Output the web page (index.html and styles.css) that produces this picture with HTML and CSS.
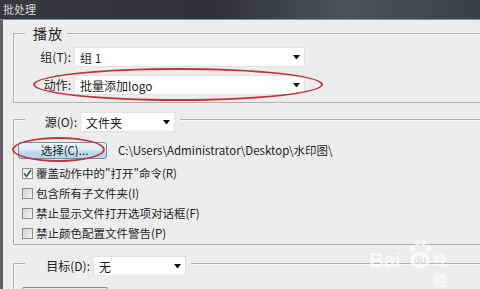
FILE: index.html
```html
<!DOCTYPE html>
<html lang="zh-CN">
<head>
    <meta charset="UTF-8">
    <title>批处理</title>
    <link rel="stylesheet" href="styles.css">
</head>
<body>
    <div class="titlebar">批处理</div>

    <div class="frame">
        <!-- 播放 -->
        <div class="group">
            <div class="group-head play-head">播放</div>
            <div class="row first">
                <span class="label">组(T):</span>
                <div class="select wide"><span>组 1</span><i class="arrow"></i></div>
            </div>
            <div class="row">
                <span class="label">动作:</span>
                <div class="select wide"><span>批量添加logo</span><i class="arrow"></i></div>
                <div class="mark mark-action"></div>
            </div>
        </div>

        <!-- 源 -->
        <div class="group source">
            <div class="group-head">
                <span class="label src-label">源(O):</span>
                <div class="select src-select"><span>文件夹</span><i class="arrow"></i></div>
            </div>
            <div class="choose-row">
                <button class="btn">选择(C)...</button>
                <span class="path">C:\Users\Administrator\Desktop\水印图\</span>
                <div class="mark mark-btn"></div>
            </div>
            <div class="checks">
                <div class="check"><span class="box checked"><svg width="9" height="9" viewBox="0 0 9 9"><path d="M1 4.5 L3.5 7.5 L8 1" fill="none" stroke="#3a4a7a" stroke-width="1.6"/></svg></span>覆盖动作中的"打开"命令(R)</div>
                <div class="check"><span class="box"></span>包含所有子文件夹(I)</div>
                <div class="check"><span class="box"></span>禁止显示文件打开选项对话框(F)</div>
                <div class="check"><span class="box"></span>禁止颜色配置文件警告(P)</div>
            </div>
        </div>

        <!-- 目标 -->
        <div class="group target">
            <div class="group-head">
                <span class="label dst-label">目标(D):</span>
                <div class="select dst-select"><span>无</span><i class="arrow"></i></div>
            </div>
            <div class="btn btn-next"></div>
        </div>
    </div>

    <div class="watermark">
        <span class="wm-bai">Bai</span>
        <span class="wm-paw">
            <i class="toe t1"></i><i class="toe t2"></i><i class="toe t3"></i><i class="toe t4"></i>
            <span class="pad">du</span>
        </span>
        <span class="wm-jy">经验</span>
        <div class="wm-url">jingyan.baidu.com</div>
    </div>
</body>
</html>
```

FILE: styles.css
```css
html {
    overflow: hidden;
}

body {
    margin: 0;
    width: 480px;
    height: 289px;
    overflow: hidden;
    background: #ededed;
    font-family: "Noto Sans CJK SC", "Noto Sans", sans-serif;
    font-size: 11.5px;
    color: #1e1e1e;
    position: relative;
}

.titlebar {
    height: 19px;
    line-height: 19px;
    padding-left: 3px;
    font-size: 11px;
    color: #d6d6d6;
    background: linear-gradient(to right, #353a41 0%, #2e333a 45%, #4a525c 72%, #39404a 100%);
    border-bottom: 1px solid #8a8d92;
}

.frame {
    border-left: 3px solid #5e636a;
    padding: 13px 0 0 10px;
}

.group {
    border: 1px solid #b1b1b1;
    border-right: none;
    width: 480px;
    box-shadow: inset 1px 1px 0 #fafafa;
}

.group-head {
    display: flex;
    align-items: center;
    gap: 3px;
    width: fit-content;
    margin: -8px 0 0 11px;
    padding: 0 5px;
    background: #ededed;
}

.play-head {
    margin-top: -9px;
    padding: 0 4px 0 8px;
    line-height: 16px;
    font-size: 14px;
    letter-spacing: 1px;
}

.row {
    position: relative;
    display: flex;
    align-items: center;
    gap: 3px;
    margin-top: 8px;
}

.row.first {
    margin-top: 6px;
}

.group .row:last-child {
    margin-bottom: 7px;
}

.label {
    width: 57px;
    text-align: right;
    line-height: 20px;
    font-size: 12px;
}

.select {
    box-sizing: border-box;
    height: 20px;
    display: flex;
    align-items: center;
    justify-content: space-between;
    padding: 0 4px 0 5px;
    background: #ffffff;
    border: 1px solid #e3e3e3;
    font-size: 12px;
}

.select.wide {
    width: 231px;
}

.arrow {
    width: 1px;
    height: 0;
    border-left: 3px solid transparent;
    border-right: 3px solid transparent;
    border-top: 4px solid #111111;
}

.source {
    margin-top: 16px;
}

.src-label {
    width: 47px;
}

.src-select {
    width: 95px;
}

.choose-row {
    position: relative;
    display: flex;
    align-items: center;
    gap: 11px;
    margin: 10px 0 0 4px;
}

.btn {
    box-sizing: border-box;
    width: 89px;
    height: 17px;
    padding: 0 0 0 4px;
    font-family: inherit;
    font-size: 11.5px;
    line-height: 15px;
    color: #1e1e1e;
    border: 1px solid #6f8eaa;
    border-radius: 3px;
    background: linear-gradient(#eef6fb 0%, #dcecf7 48%, #c3ddee 52%, #b6d3e8 100%);
}

.path {
    line-height: 17px;
}

.checks {
    margin-top: 4px;
    padding-bottom: 1px;
}

.check {
    display: flex;
    align-items: center;
    gap: 3px;
    height: 20px;
    padding-left: 8px;
}

.box {
    box-sizing: border-box;
    width: 11px;
    height: 11px;
    display: flex;
    align-items: center;
    justify-content: center;
    border: 1px solid #8e8f8f;
    background: linear-gradient(135deg, #d2d2d2, #f4f4f4);
}

.box.checked {
    background: linear-gradient(135deg, #e6e6e6, #ffffff);
}

.target {
    margin-top: 18px;
}

.dst-label {
    width: 60px;
}

.dst-select {
    width: 93px;
}

.btn-next {
    margin: 11px 0 0 8px;
    width: 86px;
    height: 2px;
    border-color: #8a8a8a;
    border-bottom: none;
    border-radius: 3px 3px 0 0;
    background: linear-gradient(#f4f4f4, #dedede);
}

/* 红色圈注 */
.mark {
    position: absolute;
    border: 2px solid #c3343a;
    border-radius: 50%;
    box-sizing: border-box;
}

.mark-action {
    left: 19px;
    top: -7px;
    width: 290px;
    height: 33px;
}

.mark-btn {
    left: -6px;
    top: -5px;
    width: 93px;
    height: 25px;
}

/* 百度经验水印 */
.watermark {
    position: absolute;
    left: 367px;
    top: 236px;
    color: #ffffff;
    opacity: 0.7;
    font-family: "Liberation Sans", sans-serif;
}

.wm-bai {
    position: absolute;
    left: 2px;
    top: 12px;
    font-size: 21px;
    font-weight: bold;
    letter-spacing: -0.5px;
}

.wm-paw {
    position: absolute;
    left: 40px;
    top: 2px;
    width: 24px;
    height: 30px;
}

.toe {
    position: absolute;
    width: 5px;
    height: 6px;
    border-radius: 50%;
    background: #ffffff;
}

.t1 { left: 3px; top: 8px; }
.t2 { left: 8px; top: 2px; }
.t3 { left: 14px; top: 2px; }
.t4 { left: 19px; top: 8px; }

.pad {
    position: absolute;
    left: 3px;
    top: 14px;
    width: 20px;
    height: 16px;
    border-radius: 50% 50% 45% 45%;
    background: #ffffff;
    color: #dcdcdc;
    font-size: 10px;
    font-weight: bold;
    line-height: 17px;
    text-align: center;
}

.wm-jy {
    position: absolute;
    left: 66px;
    top: 13px;
    font-family: "Noto Sans CJK SC", sans-serif;
    font-size: 14px;
    font-weight: bold;
    letter-spacing: -1px;
}

.wm-url {
    position: absolute;
    left: 6px;
    top: 36px;
    font-size: 7px;
    letter-spacing: 0.5px;
    color: #f6f6f6;
    white-space: nowrap;
}
```
